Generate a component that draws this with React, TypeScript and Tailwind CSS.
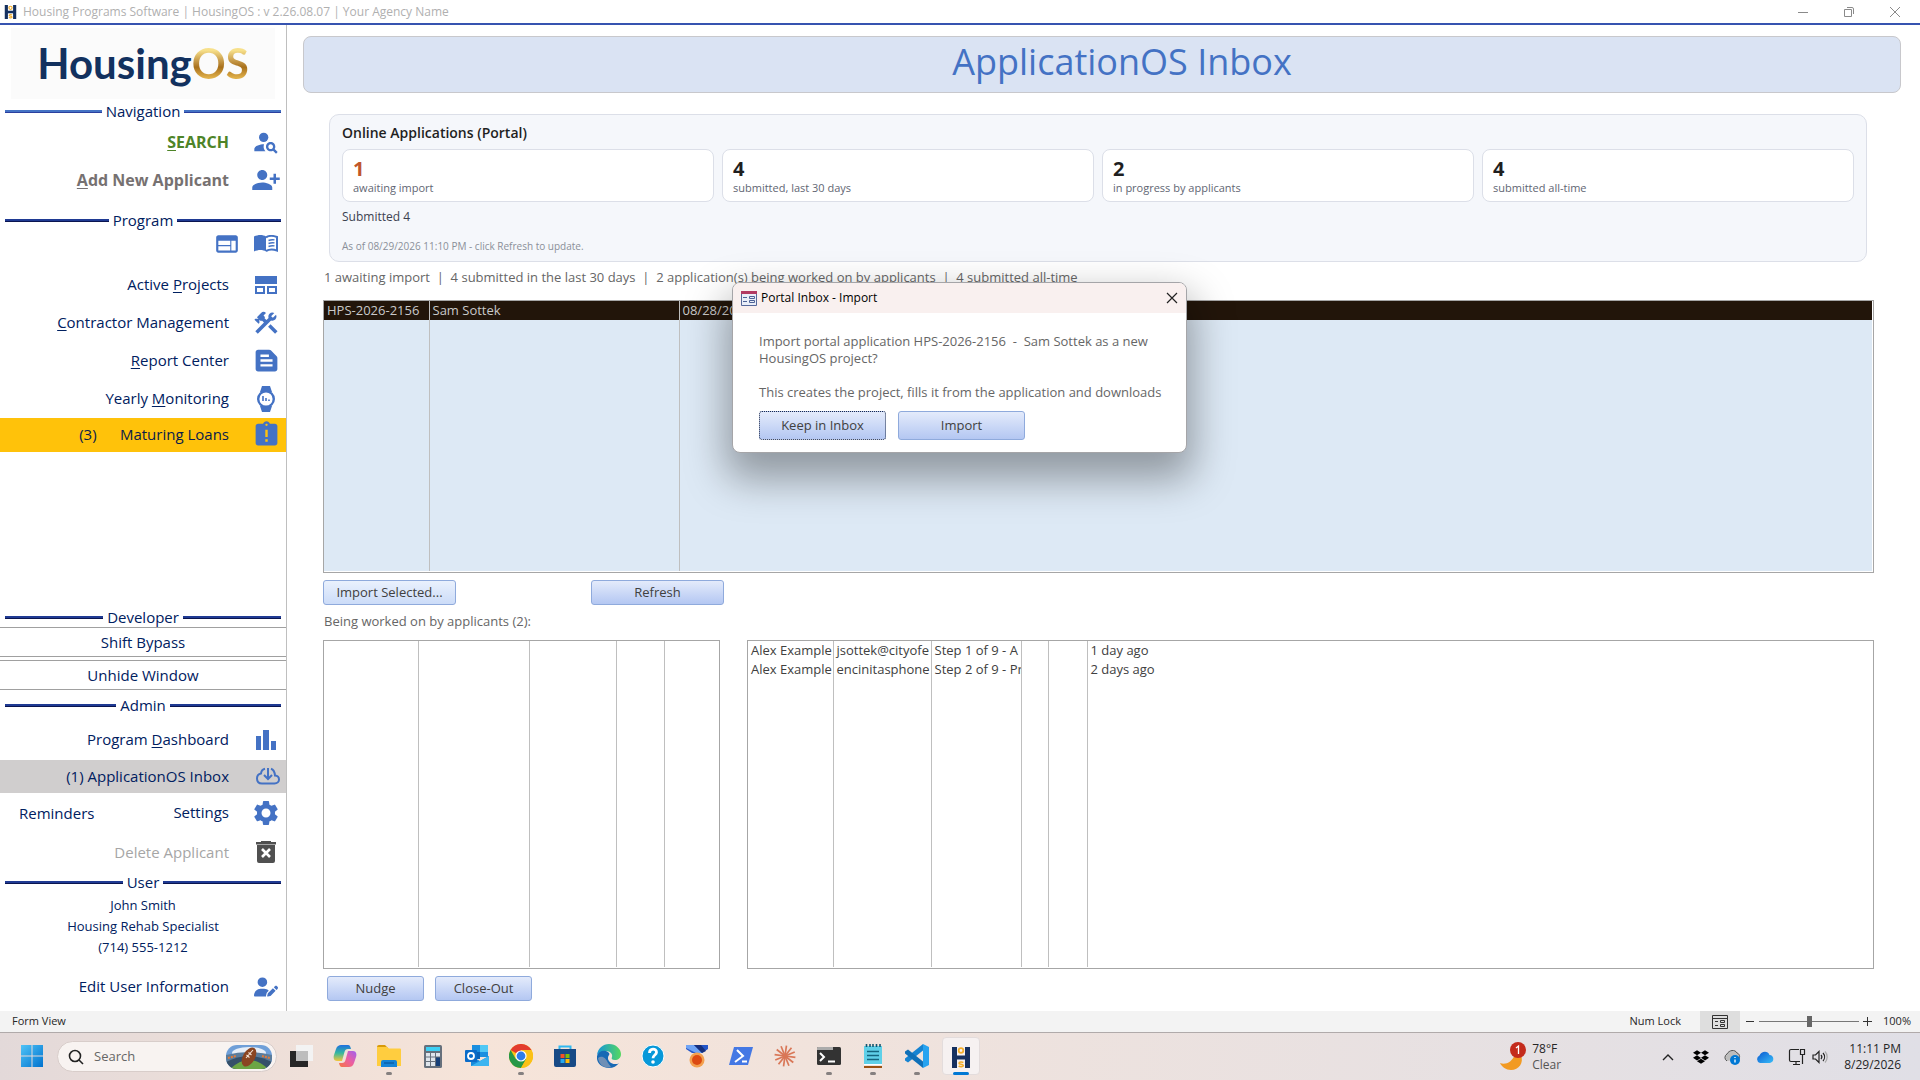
import { useState } from "react";
import type { ReactNode } from "react";
import {
  MdAssignmentLate,
  MdConstruction,
  MdPersonAddAlt1,
  MdPersonSearch,
  MdSettings,
  MdTextSnippet,
  MdWeb,
} from "react-icons/md";
import { FaDropbox, FaUserPen } from "react-icons/fa6";

const stats = [
  { value: "1", label: "awaiting import", color: "text-[#c0562b]" },
  { value: "4", label: "submitted, last 30 days", color: "text-[#1f1f1f]" },
  { value: "2", label: "in progress by applicants", color: "text-[#1f1f1f]" },
  { value: "4", label: "submitted all-time", color: "text-[#1f1f1f]" },
];

const inProgress = [
  ["Alex Example", "jsottek@cityofe", "Step 1 of 9 - A", "", "", "1 day ago"],
  ["Alex Example", "encinitasphone", "Step 2 of 9 - Pr", "", "", "2 days ago"],
];

function HosMark({ className }: { className: string }) {
  return (
    <svg viewBox="0 0 20 22" className={className}>
      <path d="M1 0h5v8h8V0h5v22h-5v-8H6v8H1z" fill="#15305f" />
      <rect x="6" y="0" width="8" height="22" fill="#fff" />
      <rect x="5" y="9" width="10" height="4" fill="#15305f" />
      <circle cx="10" cy="4.500" r="2.500" fill="none" stroke="#f3ae2c" strokeWidth="1.800" />
      <path d="M12.500 15.800c-1-.9-4.600-1-4.600.7 0 1.600 4.600.7 4.600 2.500 0 1.700-4 1.500-5 .5" fill="none" stroke="#f3ae2c" strokeWidth="1.700" />
    </svg>
  );
}

function BookIcon() {
  return (
    <svg viewBox="0 0 24 18" className="w-6 h-[18px]" fill="none" stroke="#4472c4">
      <path d="M0 1.500C4-.5 9-.5 12 1.500v15C9 14.500 4 14.500 0 16.500z" fill="#4472c4" stroke="none" />
      <path d="M12 2.300C15 .5 19 .5 23 2v13.600c-4-1.400-8-1.200-11 .4" strokeWidth="2" />
      <path d="M14.500 5.500q3-1.200 6-.6M14.500 8.500q3-1.200 6-.6M14.500 11.500q3-1.200 6-.6" strokeWidth="1.400" />
    </svg>
  );
}

function ProjectsIcon() {
  return (
    <svg viewBox="0 0 22 18" className="w-[22px] h-[18px]" fill="none" stroke="#4472c4" strokeWidth="2">
      <path d="M0 0h22v8H0z" fill="#4472c4" stroke="none" />
      <path d="M1 11h8v6H1zM13 11h8v6h-8z" />
    </svg>
  );
}

function WatchIcon() {
  return (
    <svg viewBox="0 0 20 26" className="w-5 h-[26px]">
      <path d="M6 0h8l2 6H4zM4 20h12l-2 6H6z" fill="#4472c4" />
      <circle cx="10" cy="13" r="7.800" fill="#fff" stroke="#4472c4" strokeWidth="2.400" />
      <path d="M7 10v5M10 12v3M13 13.500v1.500" stroke="#4472c4" strokeWidth="1.600" />
    </svg>
  );
}

function BarsIcon() {
  return (
    <svg viewBox="0 0 20 20" className="w-5 h-5" fill="#4472c4">
      <path d="M0 6h5v14H0zM7 0h6v20H7zM15 11h5v9h-5z" />
    </svg>
  );
}

function CloudIcon() {
  return (
    <svg viewBox="0 0 24 18" className="ml-1 w-6 h-[18px]" fill="none" stroke="#4472c4" strokeWidth="2">
      <path d="M9 1.800C6.500 2.300 5.300 4.200 5 6.500 2.500 7 1 9 1 11.500 1 14.500 3 16.500 6 16.500h12.500c2.700 0 4.500-1.800 4.500-4s-1.500-3.800-4-4C18.700 5 17.500 2.500 15 1.700" />
      <path d="M12 1v10M8 8l4 4 4-4" />
    </svg>
  );
}

function TrashIcon() {
  return (
    <svg viewBox="0 0 20 22" className="w-5 h-[22px]" fill="#505050">
      <path d="M5 0h10v1h5v2.500H0V1h5zM1 4h18v16a2 2 0 0 1-2 2H3a2 2 0 0 1-2-2z" />
      <path d="M6 8l8 8M14 8l-8 8" stroke="#fff" strokeWidth="2.600" />
    </svg>
  );
}

function Divider({ label, height, bright }: { label: string; height: string; bright?: boolean }) {
  const line = bright ? "border-[#2b3f9f] bg-[#4472c4]" : "border-[#0a1550] bg-[#1f3a93]";
  return (
    <div className={`flex items-center gap-1 px-[5px] ${height}`}>
      <span className={`h-[3px] flex-1 border-b ${line}`} />
      <h2 className="text-[15px] leading-5 text-[#002060]">{label}</h2>
      <span className={`h-[3px] flex-1 border-b ${line}`} />
    </div>
  );
}

function NavItem({
  before = "",
  hot = "",
  after = "",
  icon,
  height = "h-[38px]",
  tone = "text-[15px] text-[#002060]",
}: {
  before?: string;
  hot?: string;
  after?: string;
  icon: ReactNode;
  height?: string;
  tone?: string;
}) {
  return (
    <button type="button" className={`flex w-full items-center justify-end gap-[23px] pr-1.5 pb-px ${height} ${tone}`}>
      <span className="whitespace-pre">
        {before}
        <span className="underline underline-offset-2">{hot}</span>
        {after}
      </span>
      <span className="flex w-7 justify-center text-[#4472c4] [&>svg]:shrink-0">{icon}</span>
    </button>
  );
}

function Sidebar() {
  return (
    <nav className="flex w-[287px] shrink-0 flex-col border-r border-[#bfbfbf] pt-[3px] pb-[3px]">
      <div className="mx-[11px] flex h-[71px] items-center justify-center bg-[#fbfbfb] pb-0.5 font-['Lato'] text-[42px] leading-none font-bold text-[#12315f]">
        Housing
        <span className="bg-linear-to-b from-[#f7e08a] from-20% via-[#a8701a] via-60% to-[#e0b04a] to-85% bg-clip-text text-transparent">OS</span>
      </div>
      <Divider label="Navigation" height="h-6" bright />
      <NavItem hot="S" after="EARCH" icon={<MdPersonSearch size={28} />} tone="text-base font-bold text-[#4e8428]" />
      <NavItem hot="A" after="dd New Applicant" icon={<MdPersonAddAlt1 size={30} />} tone="text-base font-bold text-[#767171]" />
      <Divider label="Program" height="mt-[9px] h-6" />
      <div className="mb-2.5 flex h-6 items-center justify-end gap-3.5 pr-2 text-[#4472c4]">
        <button type="button" aria-label="Web view"><MdWeb size={26} /></button>
        <button type="button" aria-label="Manual"><BookIcon /></button>
      </div>
      <NavItem before="Active " hot="P" after="rojects" icon={<ProjectsIcon />} />
      <NavItem hot="C" after="ontractor Management" icon={<MdConstruction size={28} />} />
      <NavItem hot="R" after="eport Center" icon={<MdTextSnippet size={29} />} />
      <NavItem before="Yearly " hot="M" after="onitoring" icon={<WatchIcon />} />
      <div className="bg-[#ffc20a]">
        <NavItem before="(3)      Maturing Loans" icon={<MdAssignmentLate size={29} />} height="h-[34px]" tone="text-[15px] text-[#0a1c4a]" />
      </div>

      <div className="flex-1" />

      <Divider label="Developer" height="h-5" />
      <button type="button" className="mb-[3px] h-[30px] border-y border-[#a0a0a0] text-[15px] text-[#002060]">Shift Bypass</button>
      <button type="button" className="h-[30px] border-y border-[#a0a0a0] text-[15px] text-[#002060]">Unhide Window</button>
      <Divider label="Admin" height="h-[30px]" />
      <NavItem before="Program " hot="D" after="ashboard" icon={<BarsIcon />} height="h-10" />
      <div className="bg-[#d0cece]">
        <NavItem before="(1) ApplicationOS Inbox" icon={<CloudIcon />} height="h-[33px]" />
      </div>
      <div className="flex h-10 items-center pl-[19px] text-[#002060]">
        <button type="button" className="text-[15px]">Reminders</button>
        <NavItem before="Settings" icon={<MdSettings size={30} />} height="h-10" />
      </div>
      <button type="button" disabled className="flex h-[38px] items-center justify-end gap-[23px] pr-1.5 text-[15px] text-[#a6a6a6]">
        Delete Applicant
        <span className="flex w-7 justify-center"><TrashIcon /></span>
      </button>
      <Divider label="User" height="h-[22px]" />
      <div className="pt-0.5 pb-2 text-center text-[13px] leading-[21px] text-[#002060]">
        <p>John Smith</p>
        <p>Housing Rehab Specialist</p>
        <p>(714) 555-1212</p>
      </div>
      <NavItem before="Edit User Information" icon={<FaUserPen size={24} />} height="h-[42px]" />
    </nav>
  );
}

function AccessButton({ children, width, tall, focused, light }: { children: ReactNode; width: string; tall?: boolean; focused?: boolean; light?: boolean }) {
  return (
    <button
      type="button"
      className={`rounded-[3px] border bg-linear-to-b pb-0.5 text-[13px] leading-5 text-[#404040] ${width} ${tall ? "h-[29px]" : "h-[25px]"} ${
        light ? "from-[#eaf1fd] to-[#ccdcf8]" : "from-[#e4ebfb] to-[#b4c7f2]"
      } ${focused ? "border-dotted border-[#1c2a4a]" : "border-[#8faadc]"}`}
    >
      {children}
    </button>
  );
}

function ListTable({ widths, rows, label, selected }: { widths: number[]; rows: string[][]; label: string; selected?: boolean }) {
  const columns = widths.length + 1;
  return (
    <table aria-label={label} className="h-full w-full table-fixed border-collapse text-[13px] leading-[19px]">
      <colgroup>
        {widths.map((w, i) => (
          <col key={i} style={{ width: w }} />
        ))}
        <col />
      </colgroup>
      <tbody>
        {rows.map((row, r) => (
          <tr key={r} className={selected ? "h-[19px] bg-[#22150a] text-[#c9c9c9]" : "h-[19px] text-[#404040]"}>
            {row.map((cell, c) => (
              <td key={c} className="overflow-hidden border-r border-[#bfbfbf] p-0 pl-[3px] whitespace-nowrap last:border-r-0">
                {cell}
              </td>
            ))}
          </tr>
        ))}
        <tr>
          {Array.from({ length: columns }, (_, c) => (
            <td key={c} className="border-r border-[#bfbfbf] p-0 last:border-r-0" />
          ))}
        </tr>
      </tbody>
    </table>
  );
}

function ImportDialog() {
  return (
    <div
      role="dialog"
      aria-labelledby="import-title"
      className="absolute top-[257px] left-[445px] w-[455px] overflow-hidden rounded-lg border border-[#a5a5a8] bg-white shadow-[0_20px_40px_6px_rgba(0,0,0,0.35)]"
    >
      <div className="flex h-[30px] items-center gap-1 bg-[#f9f0ef] pr-1 pl-2">
        <svg viewBox="0 0 16 15" className="h-[15px] w-4">
          <path d="M.5.5h15v14H.5z" fill="#e9eef8" stroke="#56699b" />
          <path d="M0 0h16v3H0z" fill="#b23a62" />
          <path d="M2 6.500h4M2 10.500h4M8.500 5.500h5v2h-5zM8.500 9.500h5v2h-5z" fill="none" stroke="#4c6296" />
        </svg>
        <h2 id="import-title" className="flex-1 text-xs text-black">Portal Inbox - Import</h2>
        <button type="button" aria-label="Close" className="p-1">
          <svg viewBox="0 0 12 12" className="h-3 w-3" stroke="#222" strokeWidth="1.200">
            <path d="M1 1l10 10M11 1L1 11" />
          </svg>
        </button>
      </div>
      <div className="px-[26px] pt-5 pb-3">
        <p className="text-[13px] leading-[17px] whitespace-pre text-[#666]">
          {"Import portal application HPS-2026-2156  -  Sam Sottek as a new\nHousingOS project?\n\nThis creates the project, fills it from the application and downloads"}
        </p>
        <div className="mt-2.5 flex gap-3">
          <AccessButton width="w-[127px]" tall focused>Keep in Inbox</AccessButton>
          <AccessButton width="w-[127px]" tall>Import</AccessButton>
        </div>
      </div>
    </div>
  );
}

function Inbox() {
  return (
    <main className="relative flex min-w-0 flex-1 flex-col pt-[11px] pl-4 text-[#666]">
      <header className="mr-[19px] flex h-[57px] items-center justify-center rounded-lg border border-[#c8c8cc] bg-[#dae3f3] pb-1.5 pl-10">
        <h1 className="text-4xl leading-10 text-[#4472c4]">ApplicationOS Inbox</h1>
      </header>

      <section className="mt-[21px] mr-[53px] ml-[26px] h-[148px] rounded-[10px] border border-[#dcdfe8] bg-[#f5f7fb] px-3 pt-[7px]">
        <h2 className="text-sm leading-[22px] font-semibold text-[#1f1f1f]">Online Applications (Portal)</h2>
        <div className="mt-[5px] grid grid-cols-4 gap-2">
          {stats.map((s) => (
            <div key={s.label} className="h-[53px] rounded-lg border border-[#dcdfe8] bg-white px-2.5 pt-[7px]">
              <p className={`text-xl leading-[23px] font-bold ${s.color}`}>{s.value}</p>
              <p className="text-[11px] leading-4 text-[#5f6673]">{s.label}</p>
            </div>
          ))}
        </div>
        <p className="mt-1.5 text-xs leading-[18px] text-[#3c4250]">Submitted 4</p>
        <p className="mt-3 text-[10px] leading-4 text-[#8a8f99]">As of 08/29/2026 11:10 PM - click Refresh to update.</p>
      </section>

      <div className="mr-[46px] ml-5 flex flex-1 flex-col">
        <p className="mt-[5px] pl-px text-[13px] leading-5 whitespace-pre">
          {"1 awaiting import  |  4 submitted in the last 30 days  |  2 application(s) being worked on by applicants  |  4 submitted all-time"}
        </p>
        <div className="mt-[13px] h-[273px] border border-[#a6a6a6] bg-white pr-px pb-px">
          <div className="h-full bg-[#dde9f5]">
            <ListTable label="Applications awaiting import" widths={[105, 250]} rows={[["HPS-2026-2156", "Sam Sottek", "08/28/2026"]]} selected />
          </div>
        </div>
        <div className="mt-[7px] flex gap-[135px]">
          <AccessButton width="w-[133px]" light>Import Selected...</AccessButton>
          <AccessButton width="w-[133px]">Refresh</AccessButton>
        </div>
        <p className="mt-1.5 pl-px text-[13px] leading-5">Being worked on by applicants (2):</p>
        <div className="mt-[9px] flex h-[329px] gap-[27px]">
          <div className="w-[397px] shrink-0 border border-[#a6a6a6] pb-px">
            <ListTable label="Awaiting response" widths={[94, 111, 87, 48]} rows={[]} />
          </div>
          <div className="min-w-0 flex-1 border border-[#a6a6a6] pb-px">
            <ListTable label="Applications in progress" widths={[85, 98, 90, 27, 39]} rows={inProgress} />
          </div>
        </div>
        <div className="mt-[7px] mb-2 ml-1 flex gap-[11px]">
          <AccessButton width="w-[97px]">Nudge</AccessButton>
          <AccessButton width="w-[97px]">Close-Out</AccessButton>
        </div>
      </div>
      <ImportDialog />
    </main>
  );
}

function StatusBar() {
  const [zoom, setZoom] = useState(50);
  return (
    <footer className="flex h-[22px] items-center border-b border-[#b0aaaa] bg-[#f3f3f3] pr-[9px] pl-3 text-[11px] text-[#262626]">
      <span className="flex-1">Form View</span>
      <span className="mr-[19px]">Num Lock</span>
      <button type="button" aria-label="Form view" className="flex h-full w-10 items-center justify-center bg-[#dedede]">
        <svg viewBox="0 0 16 14" className="h-3.5 w-4" fill="none" stroke="#333">
          <path d="M.5.5h15v13H.5zM1 3.500h14M3 6.500h3M3 10.500h3M8.500 5.500h4v2h-4zM8.500 9.500h4v2h-4z" />
        </svg>
      </button>
      <button type="button" aria-label="Zoom out" className="ml-1.5 flex w-[13px]">
        <span className="h-px w-2 bg-[#333]" />
      </button>
      <input
        type="range"
        aria-label="Zoom"
        value={zoom}
        onChange={(e) => setZoom(Number(e.target.value))}
        className="h-[11px] w-[100px] appearance-none bg-[linear-gradient(#777,#777)] bg-size-[100%_1px] bg-center bg-no-repeat [&::-webkit-slider-thumb]:h-[11px] [&::-webkit-slider-thumb]:w-[5px] [&::-webkit-slider-thumb]:appearance-none [&::-webkit-slider-thumb]:bg-[#666]"
      />
      <button type="button" aria-label="Zoom in" className="ml-1 w-5">
        <svg viewBox="0 0 9 9" className="h-[9px] w-[9px]" stroke="#333">
          <path d="M4.500 0v9M0 4.500h9" />
        </svg>
      </button>
      <span>100%</span>
    </footer>
  );
}

// running: small grey pill under the icon, active: highlighted tile
function TaskIcon({ label, children, running, active }: { label: string; children: ReactNode; running?: boolean; active?: boolean }) {
  return (
    <button type="button" aria-label={label} className="flex h-full w-11 shrink-0 justify-center pt-1">
      <span className={`flex h-[38px] w-[38px] flex-col items-center pt-[7px] ${active ? "rounded border border-[#e3dcdc] bg-[#f6f1f1]" : ""}`}>
        <svg viewBox="0 0 24 24" className="h-6 w-6 shrink-0">{children}</svg>
        {running && <span className="mt-1 h-[3px] w-1.5 shrink-0 rounded-full bg-[#858080]" />}
        {active && <span className="mt-[3px] h-[3px] w-4 shrink-0 rounded-full bg-[#0078d4]" />}
      </span>
    </button>
  );
}

const rays = Array.from({ length: 12 }, (_, i) => i * 30 + 8);

function Taskbar() {
  return (
    <div className="flex h-[47px] items-center bg-linear-to-r from-[#e3d9d9] via-[#f6e4d9] via-25% to-[#e0dfe6] pr-[19px] pl-[10px]">
      <svg width="0" height="0" className="absolute">
        <defs>
          <linearGradient id="win" x1="0" y1="0" x2="1" y2="1"><stop offset="0" stopColor="#4fc3f7" /><stop offset="1" stopColor="#0072ce" /></linearGradient>
          <linearGradient id="copA" x1="0" y1="0" x2="0" y2="1"><stop offset="0" stopColor="#1f6fe0" /><stop offset=".5" stopColor="#35b8a0" /><stop offset="1" stopColor="#f4c63a" /></linearGradient>
          <linearGradient id="copB" x1="0" y1="1" x2="1" y2="0"><stop offset="0" stopColor="#f6763f" /><stop offset=".5" stopColor="#ec5fa0" /><stop offset="1" stopColor="#a060f0" /></linearGradient>
          <linearGradient id="edgeA" x1="0" y1="0" x2="1" y2="0"><stop offset="0" stopColor="#1595d8" /><stop offset="1" stopColor="#55d860" /></linearGradient>
          <linearGradient id="drive" x1="0" y1="0" x2="1" y2="1"><stop offset="0" stopColor="#0a57d0" /><stop offset="1" stopColor="#38bdf8" /></linearGradient>
          <clipPath id="stadium"><rect width="46" height="24" rx="11" /></clipPath>
        </defs>
      </svg>
      <TaskIcon label="Start">
        <path d="M1 1h10.500v10.500H1zM12.500 1H23v10.500H12.500zM1 12.500h10.500V23H1zM12.500 12.500H23V23H12.500z" fill="url(#win)" />
      </TaskIcon>
      <label className="mr-0.5 ml-[3px] flex h-[31px] w-[220px] items-center rounded-full border border-[#d8cdca] bg-[#f8f3f1] pr-1 pl-2.5">
        <svg viewBox="0 0 16 16" className="h-4 w-4 shrink-0" fill="none" stroke="#222" strokeWidth="1.600">
          <circle cx="7" cy="7" r="5.500" />
          <path d="M11 11l4 4" />
        </svg>
        <input type="text" aria-label="Search" placeholder="Search" className="ml-2.5 min-w-0 flex-1 bg-transparent text-[13px] text-[#333] placeholder-[#666] outline-none" />
        <svg viewBox="0 0 46 24" className="h-6 w-[46px] shrink-0">
          <g clipPath="url(#stadium)">
            <path d="M0 0h46v24H0z" fill="#6f9fd8" />
            <ellipse cx="23" cy="8" rx="17" ry="6" fill="#e6eef8" />
            <path d="M0 10q23-6 46 0v14H0z" fill="#5a7c9c" />
            <path d="M0 17q23-12 46 0v7H0z" fill="#35506a" />
            <path d="M4 24q19-18 38 0z" fill="#6ca544" />
            <path d="M2 13l8-2M36 11l8 2" stroke="#e07a3a" strokeWidth="2" strokeDasharray="2 1" />
          </g>
          <ellipse cx="23" cy="12" rx="6" ry="10.500" transform="rotate(30 23 12)" fill="#8a4522" />
          <path d="M20 13l7-8M20.500 10l3 2.500M22.500 7.500l3 2.500" stroke="#f3e3d6" strokeWidth="1.100" />
        </svg>
      </label>
      <TaskIcon label="Task view">
        <path d="M1 7h18v16H1z" fill="#262626" />
        <path d="M7 1h17v16H7z" fill="#f3f3f3" />
        <path d="M7 7h12v10H7z" fill="#bdbdbd" />
      </TaskIcon>
      <TaskIcon label="Copilot">
        <path d="M8 1h7c2 0 2.500 2 3 4h-3c-2 0-3 1-3.500 3L9 17H4c-3 0-4-3-3-6L3 5c1-3 3-4 5-4z" fill="url(#copA)" />
        <path d="M16 23H9c-2 0-2.500-2-3-4h3c2 0 3-1 3.500-3L15 7h5c3 0 4 3 3 6l-2 6c-1 3-3 4-5 4z" fill="url(#copB)" />
      </TaskIcon>
      <TaskIcon label="File Explorer" running>
        <path d="M0 3a2 2 0 0 1 2-2h6l3 3h-5z" fill="#d89a0a" />
        <path d="M0 3h10l2 1.500h11a1 1 0 0 1 1 1V22H0z" fill="#ffcd3f" />
        <path d="M4 23v-5a2 2 0 0 1 2-2h12a2 2 0 0 1 2 2v5z" fill="#1583d6" />
        <path d="M7 19h10" stroke="#0b5fa8" strokeWidth="1.500" />
      </TaskIcon>
      <TaskIcon label="Calculator">
        <rect x="3" y="1" width="18" height="23" rx="1.500" fill="#66707c" />
        <path d="M5 3h14v4H5z" fill="#3ed0f5" />
        <path d="M5 9h4v3.500H5zM10 9h4v3.500h-4zM15 9h4v3.500h-4zM5 13.500h4V17H5zM10 13.500h4V17h-4zM5 18h4v4H5zM10 18h4v4h-4z" fill="#dfe6ed" />
        <path d="M15 13.500h4V22h-4z" fill="#153f78" />
      </TaskIcon>
      <TaskIcon label="Outlook">
        <path d="M7 1h16v12H7z" fill="#1a8fe0" />
        <path d="M15 1h8v7h-8z" fill="#50c8f5" />
        <path d="M7 8h8v7H7z" fill="#0a63b8" />
        <path d="M6 22V12l9 5 9-5v10z" fill="#168adb" />
        <path d="M6 22l18-10v10z" fill="#3cb4f0" />
        <rect x="0" y="6" width="12" height="12" rx="1" fill="#0a6cc9" />
        <circle cx="6" cy="12" r="3" fill="none" stroke="#fff" strokeWidth="1.800" />
      </TaskIcon>
      <TaskIcon label="Chrome" running>
        <circle cx="12" cy="12" r="12" fill="#fbc116" />
        <path d="M12 12L1.600 6A12 12 0 0 1 22.400 6H12z" fill="#e33b2e" />
        <path d="M12 12l-5.200 3L1.600 6A12 12 0 0 0 12 24l5.200-9z" fill="#279847" />
        <path d="M12 6h10.400A12 12 0 0 1 12 24l5.200-9z" fill="#fbc116" />
        <circle cx="12" cy="12" r="5.600" fill="#fff" />
        <circle cx="12" cy="12" r="4.400" fill="#2f7de9" />
      </TaskIcon>
      <TaskIcon label="Microsoft Store">
        <path d="M6.500 7V2.500h11V7" fill="none" stroke="#30b8f0" strokeWidth="2" />
        <path d="M1 5h22v16a2 2 0 0 1-2 2H3a2 2 0 0 1-2-2z" fill="#174a86" />
        <path d="M7.500 10h4v4h-4z" fill="#f35325" />
        <path d="M12.500 10h4v4h-4z" fill="#81bc06" />
        <path d="M7.500 15h4v4h-4z" fill="#25a9ef" />
        <path d="M12.500 15h4v4h-4z" fill="#ffba08" />
      </TaskIcon>
      <TaskIcon label="Edge">
        <path d="M0 11C1 4 6 0 12 0c7 0 12 5 12 10 0 4-3 6-6 6-3 0-4-1-3-3 1-3-2-6-6-6-4 0-7 2-9 4z" fill="url(#edgeA)" />
        <path d="M0 12c1-4 5-6 9-5 3 1 4 3 3 4-3 4 1 9 6 9 2 0 3 0 4-1-2 3-6 5-10 5C5 24-1 19 0 12z" fill="#1769b5" />
        <path d="M1 14c4-3 8 0 10 5l3 4c-6 2-12-2-13-9z" fill="#6f8fb5" />
      </TaskIcon>
      <TaskIcon label="Help">
        <circle cx="12" cy="12" r="11" fill="#0798d9" stroke="#fff" strokeWidth="1" />
        <path d="M8.500 9c0-5 7-5 7-.8 0 2.800-3.500 2.800-3.500 6" fill="none" stroke="#fff" strokeWidth="2.800" />
        <circle cx="12" cy="18" r="1.800" fill="#fff" />
      </TaskIcon>
      <TaskIcon label="Rewards">
        <path d="M1 1h22v4l-6 4H7L1 5z" fill="#2456c8" />
        <path d="M1 1h8l8 8h-6L1 4z" fill="#6fa4f5" />
        <path d="M9 1h7l5 6-4 2z" fill="#16307e" />
        <circle cx="12" cy="16" r="7.500" fill="#f3a04e" />
        <circle cx="12" cy="16" r="5" fill="#dc4a12" />
      </TaskIcon>
      <TaskIcon label="PowerShell">
        <path d="M5 3h19l-5 18H0z" fill="#4478e4" />
        <path d="M8 6l6 6-8 6M13 17.500h5" fill="none" stroke="#fff" strokeWidth="2" />
      </TaskIcon>
      <TaskIcon label="Claude">
        {rays.map((a) => (
          <path key={a} d="M12 12V1.500" stroke="#d97757" strokeWidth="1.700" transform={`rotate(${a} 12 12)`} />
        ))}
      </TaskIcon>
      <TaskIcon label="Terminal" running>
        <rect x="0" y="3" width="24" height="18" rx="1.500" fill="#333" />
        <path d="M1 3h7v3H0V4zM8 3h8v3H8z" fill="#ababab" />
        <path d="M3 9l4 4-4 4M11 17.500h7" fill="none" stroke="#fff" strokeWidth="2" />
      </TaskIcon>
      <TaskIcon label="Notepad" running>
        <path d="M3 2h18v18H3z" fill="#5fd0e8" />
        <path d="M5.500 0v3M9 0v3M12 0v3M15.500 0v3M19 0v3" stroke="#14566f" strokeWidth="1.600" />
        <path d="M6 7.500h12M6 11.500h12M6 15.500h12" stroke="#14667f" strokeWidth="1.600" />
        <path d="M3 20h18v1H3z" fill="#fff" />
        <path d="M3 22h18v2H3z" fill="#9c5212" />
      </TaskIcon>
      <TaskIcon label="Visual Studio Code" running>
        <path d="M18 0l6 3v18l-6 3z" fill="#27a3f0" />
        <path d="M18 0v6.500L3 18.500 0 16.500v-2z" fill="#1684d2" />
        <path d="M18 24v-6.500L3 5.500 0 7.500v2z" fill="#0f70b8" />
      </TaskIcon>
      <TaskIcon label="HousingOS" active>
        <path d="M3 2h5v8.500h8V2h5v21h-5v-8.500H8V23H3z" fill="#15305f" />
        <circle cx="12" cy="5.500" r="2.300" fill="none" stroke="#f3ae2c" strokeWidth="1.800" />
        <path d="M14.300 17.600c-1-.9-4.300-.9-4.300.6s4.300.6 4.300 2.300c0 1.500-3.600 1.400-4.600.4" fill="none" stroke="#f3ae2c" strokeWidth="1.600" />
      </TaskIcon>

      <div className="flex-1" />

      <button type="button" className="mr-[101px] flex items-center gap-1.5 text-left text-xs leading-4 text-[#262626]">
        <svg viewBox="0 0 26 30" className="h-[30px] w-[26px]">
          <path d="M0 21c5 2 12 0 15-9l6 1c3 8-2 15-10 15-5 0-9-3-11-7z" fill="#f29a22" />
          <circle cx="18" cy="8" r="8" fill="#c42b1c" />
          <path d="M16 6l2.500-2v8" fill="none" stroke="#fff" strokeWidth="1.300" />
        </svg>
        <span>
          78°F
          <span className="block text-[#555]">Clear</span>
        </span>
      </button>
      <div className="mr-[15px] flex items-center">
        <svg viewBox="0 0 12 8" className="mr-[19px] h-2 w-3" fill="none" stroke="#222" strokeWidth="1.400"><path d="M1 7l5-5 5 5" /></svg>
        <FaDropbox size={16} className="mr-3.5 text-black" />
        <svg viewBox="0 0 18 16" className="mr-[15px] h-4 w-[18px]">
          <path d="M4 12a4 4 0 0 1 0-7c2-4 8-5 10-1 3 1 3 4 2 6" fill="#bdbdbd" stroke="#555" />
          <circle cx="12" cy="11" r="5" fill="#0078d4" />
          <path d="M12 10.500v3M12 8v1" stroke="#fff" strokeWidth="1.300" />
        </svg>
        <svg viewBox="0 0 18 12" className="mr-3.5 h-3 w-[18px]">
          <path d="M4 12a4 4 0 0 1-.5-7.500C5 0 12-1 13.500 4 18 4 19 11 14 12z" fill="url(#drive)" />
        </svg>
        <svg viewBox="0 0 18 18" className="mr-1.5 h-[18px] w-[18px]" fill="none" stroke="#222" strokeWidth="1.200">
          <path d="M11 1.500H3a1.500 1.500 0 0 0-1.500 1.500v9A1.500 1.500 0 0 0 3 13.500h9M5 16.500h7M8 14v2M12.500 1.500h4v5h-4zM14.500 7v9" />
        </svg>
        <svg viewBox="0 0 17 14" className="h-3.5 w-[17px]" fill="none" stroke="#222" strokeWidth="1.200">
          <path d="M1 5h2.500L7 1.500v11L3.500 9H1zM9 5a3 3 0 0 1 0 4M11 3a6 6 0 0 1 0 8" />
          <path d="M13 1.500a8 8 0 0 1 0 11" stroke="#aaa" />
        </svg>
      </div>
      <div className="text-right text-xs leading-4 text-[#262626]">
        <p>11:11 PM</p>
        <p>8/29/2026</p>
      </div>
    </div>
  );
}

export default function App() {
  return (
    <div className="flex min-h-screen flex-col bg-white font-['Open_Sans','Noto_Sans',sans-serif]">
      <div className="flex h-[25px] items-center border-b-2 border-[#3653b0] pr-5 pl-1 text-xs text-[#b0b0b0]">
        <HosMark className="mr-1.5 h-3.5 w-[13px]" />
        <span className="flex-1">Housing Programs Software | HousingOS : v 2.26.08.07 | Your Agency Name</span>
        <div className="flex items-center gap-9">
          <button type="button" aria-label="Minimize">
            <svg viewBox="0 0 10 10" className="h-2.5 w-2.5" stroke="#8a8a8a"><path d="M0 5.500h10" /></svg>
          </button>
          <button type="button" aria-label="Restore">
            <svg viewBox="0 0 10 10" className="h-2.5 w-2.5" fill="none" stroke="#8a8a8a"><path d="M.5 2.500h7v7h-7zM3 .5h5A1.500 1.500 0 0 1 9.500 2v5" /></svg>
          </button>
          <button type="button" aria-label="Close">
            <svg viewBox="0 0 10 10" className="h-2.5 w-2.5" stroke="#8a8a8a"><path d="M0 0l10 10M10 0L0 10" /></svg>
          </button>
        </div>
      </div>
      <div className="flex flex-1">
        <Sidebar />
        <Inbox />
      </div>
      <StatusBar />
      <Taskbar />
    </div>
  );
}
